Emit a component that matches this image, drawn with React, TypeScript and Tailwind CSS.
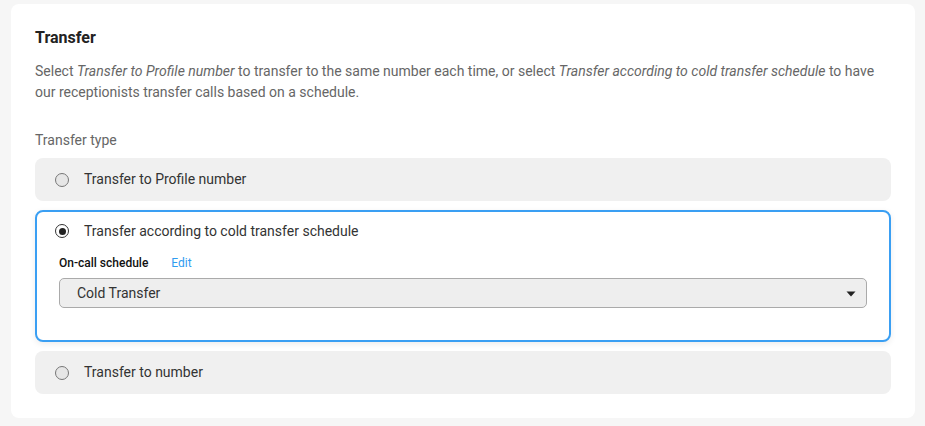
import { useState } from 'react'

type Option = { id: string; label: string }

const options: Option[] = [
  { id: 'profile', label: 'Transfer to Profile number' },
  { id: 'schedule', label: 'Transfer according to cold transfer schedule' },
  { id: 'number', label: 'Transfer to number' },
]

function Radio({ checked }: { checked: boolean }) {
  return (
    <span
      className={
        'flex h-[14px] w-[14px] shrink-0 items-center justify-center rounded-full border ' +
        (checked ? 'border-[#333] bg-white' : 'border-[#777] bg-[#e6e6e6]')
      }
    >
      {checked && <span className="h-[7px] w-[7px] rounded-full bg-[#222]" />}
    </span>
  )
}

export default function App() {
  const [selected, setSelected] = useState('schedule')

  return (
    <div
      className="min-h-[426px] bg-[#f6f6f6] pt-[4px] pl-[11px] pr-[10px] pb-[9px]"
      style={{ fontFamily: 'Roboto, "Liberation Sans", sans-serif' }}
    >
      <div className="rounded-[8px] bg-white px-[24px] pt-[22px] pb-[24px]">
        <h2 className="text-[16px] font-bold leading-[24px] text-[#222]">Transfer</h2>
        <p className="mt-[11px] text-[14px] leading-[21px] text-[#666]">
          Select <em>Transfer to Profile number</em> to transfer to the same number each time, or select{' '}
          <em>Transfer according to cold transfer schedule</em> to have our receptionists transfer calls based on a
          schedule.
        </p>
        <div className="mt-[27px] text-[14px] leading-[20px] text-[#666]">Transfer type</div>

        <div className="mt-[8px] flex flex-col gap-[9px]">
          {options.map(o => {
            const active = selected === o.id
            if (active && o.id === 'schedule') {
              return (
                <div
                  key={o.id}
                  className="rounded-[8px] border-2 border-[#3a9ff3] bg-white pl-[18px] pr-[22px] pt-[9px] pb-[32px] shadow-[0_2px_6px_rgba(0,0,0,0.08)]"
                >
                  <button
                    type="button"
                    onClick={() => setSelected(o.id)}
                    className="flex h-[20px] w-full items-center text-left"
                  >
                    <Radio checked />
                    <span className="ml-[15px] text-[14px] text-[#333]">{o.label}</span>
                  </button>
                  <div className="mt-[14px] flex items-center pl-[4px] text-[12px] leading-[16px]">
                    <span className="font-medium text-[#111]">On-call schedule</span>
                    <span className="ml-[23px] text-[#2f9cf0]">Edit</span>
                  </div>
                  <div className="mt-[7px] ml-[4px] flex h-[30px] items-center justify-between rounded-[5px] border border-[#aaa] bg-[#eeeeee] pl-[17px] pr-[10px]">
                    <span className="text-[14px] text-[#333]">Cold Transfer</span>
                    <svg width="10" height="6" viewBox="0 0 10 6" className="mt-[1px]">
                      <path d="M0.5 0.5 H9.5 L5 5.5 Z" fill="#222" />
                    </svg>
                  </div>
                </div>
              )
            }
            return (
              <button
                key={o.id}
                type="button"
                onClick={() => setSelected(o.id)}
                className="flex h-[43px] w-full items-center rounded-[8px] bg-[#f0f0f0] pl-[20px] text-left"
              >
                <Radio checked={active} />
                <span className="ml-[15px] text-[14px] text-[#333]">{o.label}</span>
              </button>
            )
          })}
        </div>
      </div>
    </div>
  )
}
